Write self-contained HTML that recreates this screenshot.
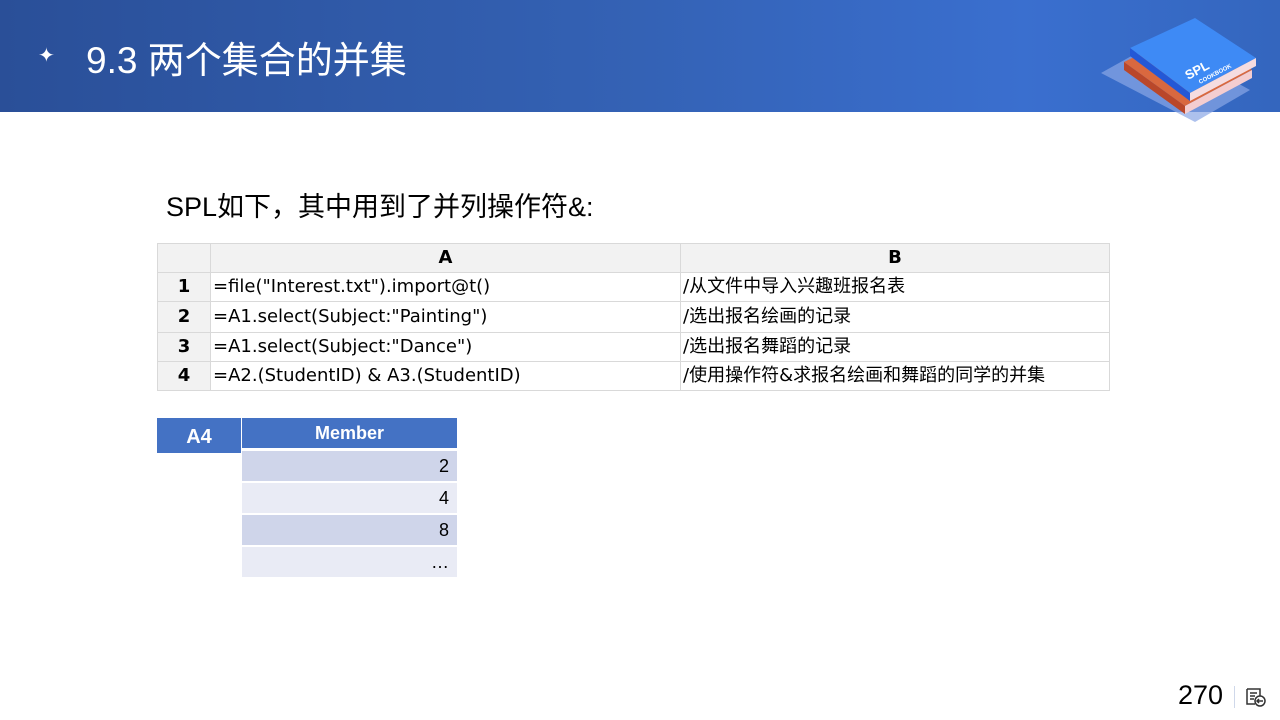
<!DOCTYPE html>
<html><head><meta charset="utf-8"><style>
body{margin:0;width:1280px;height:720px;overflow:hidden;background:#fff;font-family:"Liberation Sans","Noto Sans CJK SC",sans-serif;position:relative}
.hdr{position:absolute;left:0;top:0;width:1280px;height:112px;background:linear-gradient(90deg,#2a4f98 0%,#3462b5 50%,#3a6fcf 80%,#3466be 100%)}
.title{position:absolute;left:86px;top:30px;color:#fff;font-size:37px}
.star{position:absolute;left:38px;top:43px;color:#fff;font-size:20px}
.sub{position:absolute;left:166px;top:185px;font-size:27px;color:#000}
table.g{position:absolute;left:157px;top:243px;border-collapse:collapse;font-size:18px;font-family:"DejaVu Sans","Noto Sans CJK SC",sans-serif}
table.g td{border:1px solid #d9d9d9;padding:0 2px;height:28px;line-height:28px;white-space:nowrap}
table.g tr.h td{background:#f2f2f2;font-weight:bold;text-align:center}
table.g td.n{background:#f2f2f2;font-weight:bold;text-align:center}
.c{position:absolute;font-size:18px}
</style></head><body>
<div class="hdr"></div>
<div class="star">✦</div>
<div class="title">9.3 两个集合的并集</div>
<svg style="position:absolute;left:1100px;top:18px" width="160" height="106" viewBox="0 0 160 106">
<polygon points="1,55 60,22 150,72 95,104" fill="#8aa6e6" opacity="0.7"/>
<polygon points="24,44 90,12 152,52 85,88" fill="#d9683f"/>
<polygon points="24,44 24,52 85,96 85,88" fill="#b9472a"/>
<polygon points="85,88 152,52 152,60 85,96" fill="#f4cdd0"/>
<polygon points="30,30 95,0 156,40 90,75" fill="#3e8af5"/>
<polygon points="30,30 30,38 90,83 90,75" fill="#2458d6"/>
<polygon points="90,75 156,40 156,48 90,83" fill="#f5dce0"/>
<text x="88" y="62" fill="#fff" font-size="13" font-weight="bold" transform="rotate(-28 88 62)">SPL</text>
<text x="100" y="66" fill="#fff" font-size="6" font-weight="bold" transform="rotate(-28 100 66)">COOKBOOK</text>
</svg>
<div class="sub">SPL如下，其中用到了并列操作符&amp;:</div>
<table class="g">
<tr class="h"><td style="width:48px"></td><td style="width:465px">A</td><td style="width:424px">B</td></tr>
<tr><td class="n">1</td><td>=file("Interest.txt").import@t()</td><td>/从文件中导入兴趣班报名表</td></tr>
<tr><td class="n">2</td><td style="height:30px">=A1.select(Subject:"Painting")</td><td>/选出报名绘画的记录</td></tr>
<tr><td class="n">3</td><td>=A1.select(Subject:"Dance")</td><td>/选出报名舞蹈的记录</td></tr>
<tr><td class="n">4</td><td>=A2.(StudentID) &amp; A3.(StudentID)</td><td>/使用操作符&amp;求报名绘画和舞蹈的同学的并集</td></tr>
</table>
<div class="c" style="left:157px;top:418px;width:84px;height:35px;background:#4472c4;color:#fff;font-weight:bold;font-size:20px;text-align:center;line-height:38px">A4</div>
<div class="c" style="left:242px;top:418px;width:215px;height:30px;background:#4472c4;color:#fff;font-weight:bold;text-align:center;line-height:30px">Member</div>
<div class="c" style="left:242px;top:451px;width:207px;height:30px;background:#cfd5ea;text-align:right;padding-right:8px;line-height:30px">2</div>
<div class="c" style="left:242px;top:483px;width:207px;height:30px;background:#e9ebf5;text-align:right;padding-right:8px;line-height:30px">4</div>
<div class="c" style="left:242px;top:515px;width:207px;height:30px;background:#cfd5ea;text-align:right;padding-right:8px;line-height:30px">8</div>
<div class="c" style="left:242px;top:547px;width:207px;height:30px;background:#e9ebf5;text-align:right;padding-right:8px;line-height:30px">…</div>
<div style="position:absolute;left:1178px;top:680px;font-size:27px">270</div>
<div style="position:absolute;left:1234px;top:686px;width:1px;height:22px;background:#cfd8ea"></div>
<svg style="position:absolute;left:1245px;top:686px" width="22" height="22" viewBox="0 0 22 22" fill="none" stroke="#333" stroke-width="1.5">
<path d="M2 3h13v7M2 3v15h8M5 7h7M5 10h5M5 13h4"/><circle cx="15" cy="15" r="5"/><path d="M18 15h-6M14 13l-2 2 2 2"/></svg>
</body></html>
